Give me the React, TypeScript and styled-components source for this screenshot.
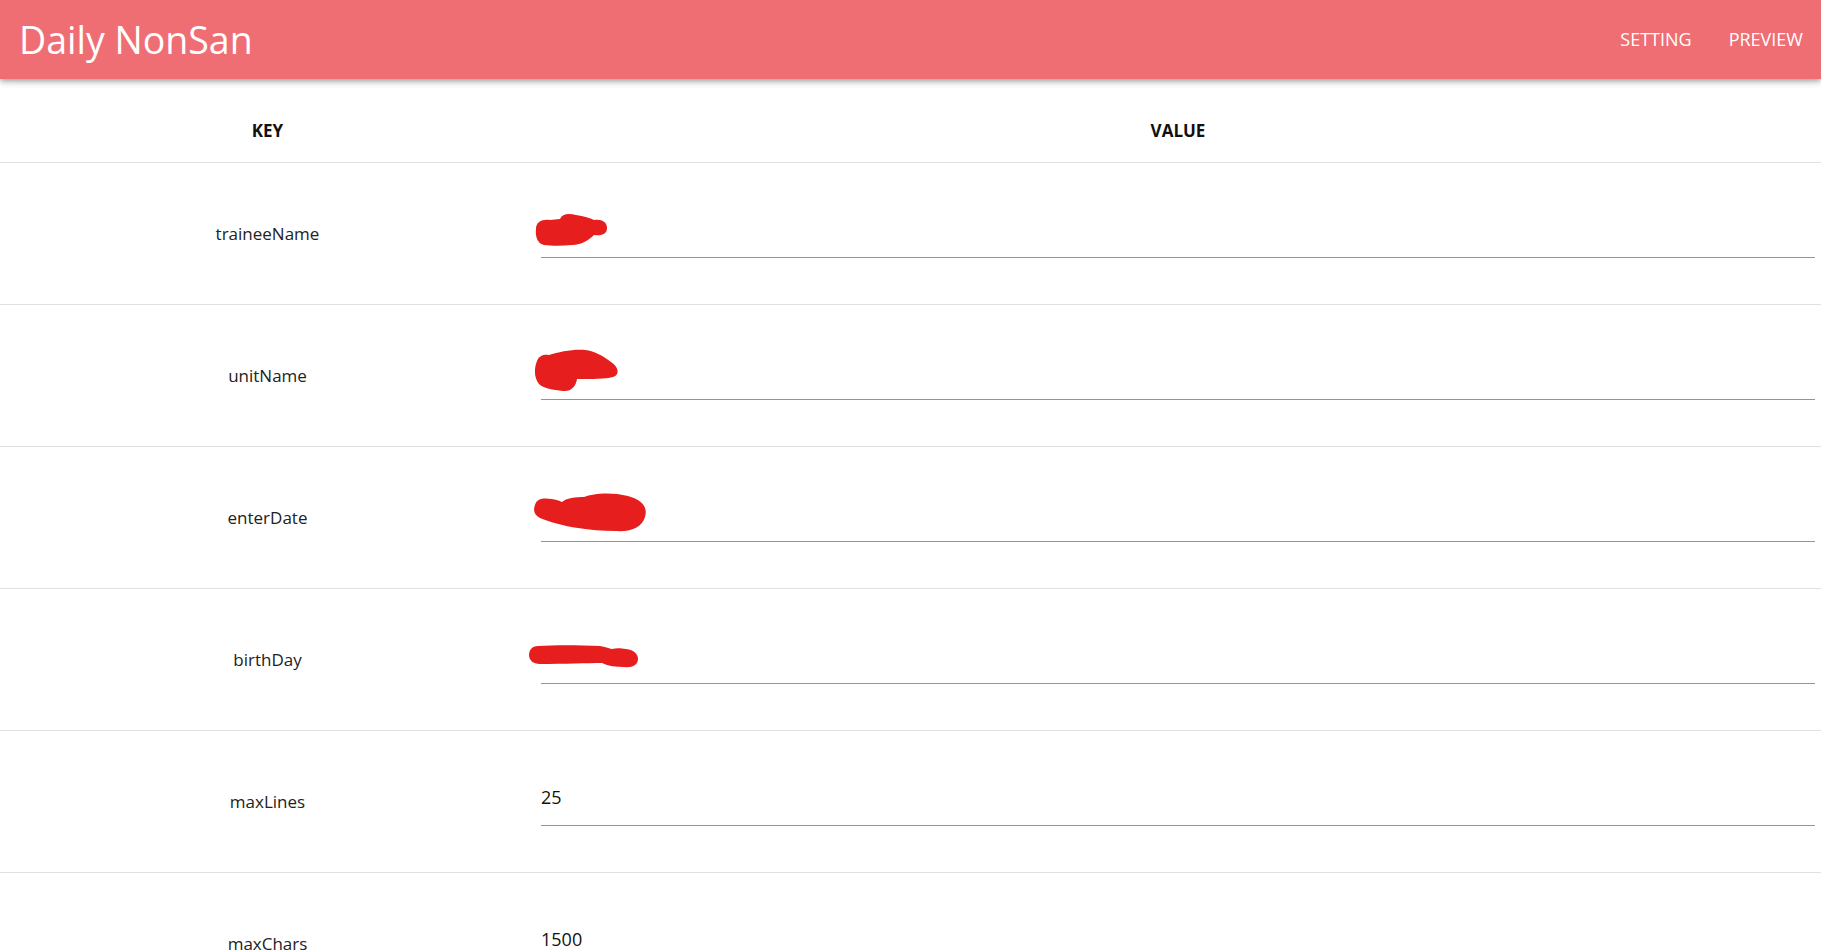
import React from 'react'
import styled, { createGlobalStyle } from 'styled-components'

const GlobalStyle = createGlobalStyle`
    html, body {
        margin: 0;
        padding: 0;
        background: #fff;
        font-family: "Open Sans", "Noto Sans", sans-serif;
        scrollbar-width: none;
    }
    body::-webkit-scrollbar {
        display: none;
    }
`

const AppBar = styled.header`
    display: flex;
    align-items: center;
    justify-content: space-between;
    height: 79px;
    padding: 0 18px 0 19px;
    background: #ef6e73;
    color: #fff;
    box-shadow: 0px 2px 4px -1px rgba(0,0,0,0.2), 0px 4px 5px 0px rgba(0,0,0,0.14), 0px 1px 10px 0px rgba(0,0,0,0.12);
    position: relative;
    z-index: 2;
`
const Title = styled.h1`
    margin: 0;
    font-size: 37.5px;
    font-weight: 400;
    letter-spacing: 0;
`
const Nav = styled.nav`
    display: flex;
    align-items: center;
    gap: 37px;
    padding-bottom: 2px;
`
const NavButton = styled.button`
    border: 0;
    background: none;
    padding: 0;
    color: #fff;
    font-family: inherit;
    font-size: 18px;
    font-weight: 400;
    text-transform: uppercase;
    cursor: pointer;
`

const Table = styled.div`
    display: grid;
    grid-template-columns: 535px 1fr;
`
const HeadCell = styled.div`
    display: flex;
    align-items: flex-end;
    justify-content: center;
    height: 84px;
    padding-bottom: 20px;
    box-sizing: border-box;
    border-bottom: 1px solid #e0e0e0;
    font-size: 17px;
    font-weight: 700;
    color: #111;
`
const KeyCell = styled.div`
    display: flex;
    align-items: center;
    justify-content: center;
    height: 142px;
    box-sizing: border-box;
    border-bottom: 1px solid #e0e0e0;
    font-size: 17px;
    color: #222;
`
const ValueCell = styled.div`
    display: flex;
    align-items: center;
    height: 142px;
    padding: 0 6px;
    box-sizing: border-box;
    border-bottom: 1px solid #e0e0e0;
`
const Field = styled.div`
    position: relative;
    flex: 1;
    height: 48px;
    box-sizing: border-box;
    border-bottom: 1px solid #949494;
    padding-top: 6px;
`
const Input = styled.input`
    display: block;
    width: 100%;
    border: 0;
    outline: none;
    padding: 0;
    background: transparent;
    font-family: inherit;
    font-size: 18px;
    line-height: 26px;
    color: #111;
`
const Redact = styled.svg`
    position: absolute;
    pointer-events: none;
`

type Blob = { left: number; top: number; w: number; h: number; d: string }

const blobs: Record<string, Blob> = {
    traineeName: {
        left: -9, top: 3, w: 76, h: 34,
        d: 'M4 16 C4 9 10 6 18 7 L28 6 C30 1 36 0 44 2 C52 3 58 5 62 7 C70 6 75 9 75 15 C75 21 70 23 62 22 C58 26 50 32 40 32 C30 33 20 33 12 32 C6 31 3 24 4 16 Z',
    },
    unitName: {
        left: -8, top: -4, w: 88, h: 46,
        d: 'M4 13 C6 7 12 6 16 7 C26 4 40 1 52 2 C62 3 70 8 78 14 C86 19 87 27 80 29 C72 31 60 31 44 31 C43 38 38 44 30 43 C20 42 10 40 6 36 C1 30 1 20 4 13 Z',
    },
    enterDate: {
        left: -9, top: -1, w: 116, h: 42,
        d: 'M3 12 C5 5 12 5 20 6 C26 7 28 8 30 9 C34 5 44 4 52 4 C62 0 80 -1 96 3 C110 7 116 14 113 24 C110 34 100 39 84 38 C70 38 58 37 46 35 C32 33 18 29 8 25 C2 22 1 17 3 12 Z',
    },
    birthDay: {
        left: -13, top: 8, w: 116, h: 26,
        d: 'M10 2 C26 1 50 1 72 2 C78 3 80 4 84 5 C88 4 92 4 98 5 C106 6 110 10 110 15 C110 21 104 24 96 23 C88 23 80 22 74 19 C60 19 36 20 12 20 C5 20 1 16 1 11 C1 6 4 2 10 2 Z',
    },
}

const rows: { key: string; value: string }[] = [
    { key: 'traineeName', value: '' },
    { key: 'unitName', value: '' },
    { key: 'enterDate', value: '' },
    { key: 'birthDay', value: '' },
    { key: 'maxLines', value: '25' },
    { key: 'maxChars', value: '1500' },
]

const App: React.FunctionComponent = () => {
    return (
        <>
        <GlobalStyle />
        <AppBar>
            <Title>Daily NonSan</Title>
            <Nav>
                <NavButton>Setting</NavButton>
                <NavButton>Preview</NavButton>
            </Nav>
        </AppBar>
        <Table>
            <HeadCell>KEY</HeadCell>
            <HeadCell>VALUE</HeadCell>
            {rows.map((r) => {
                const b = blobs[r.key]
                return (
                    <React.Fragment key={r.key}>
                        <KeyCell>{r.key}</KeyCell>
                        <ValueCell>
                            <Field>
                                <Input defaultValue={r.value} />
                                {b && (
                                    <Redact
                                        width={b.w}
                                        height={b.h}
                                        viewBox={`0 0 ${b.w} ${b.h}`}
                                        style={{ left: b.left, top: b.top }}
                                    >
                                        <path d={b.d} fill="#e61e1e" />
                                    </Redact>
                                )}
                            </Field>
                        </ValueCell>
                    </React.Fragment>
                )
            })}
        </Table>
        </>
    )
}

export default App
